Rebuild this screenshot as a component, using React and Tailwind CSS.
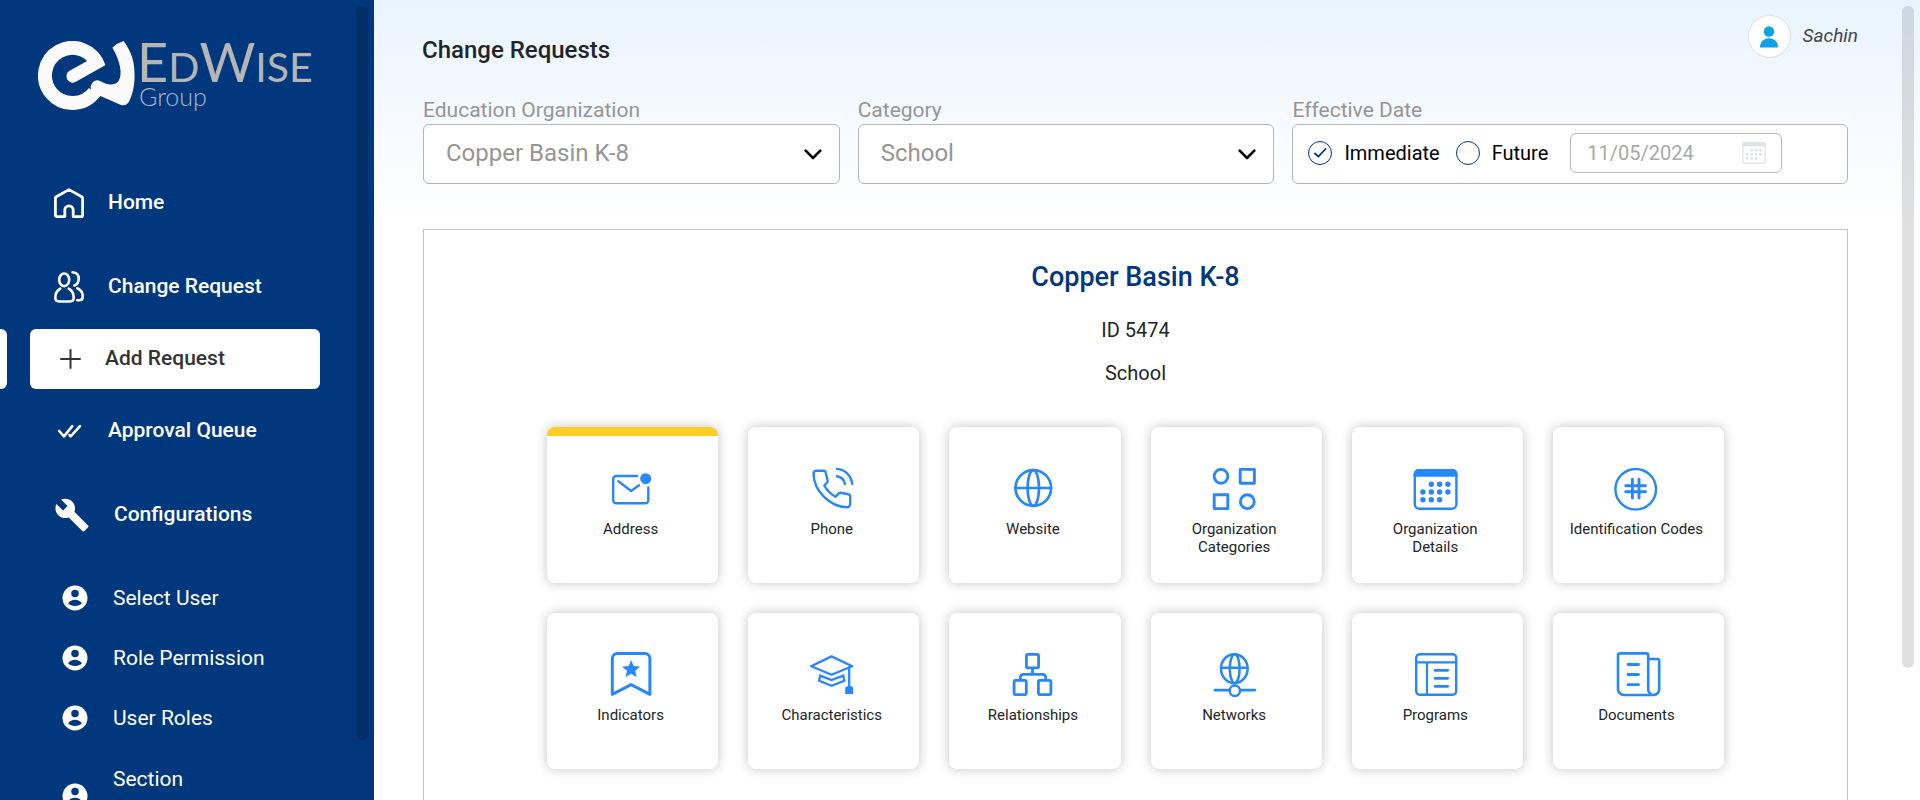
import React from "react";
import { MdBuild } from "react-icons/md";

function LogoMark() {
  return (
    <svg viewBox="115 124 290 208" className="h-[69px] w-[97px] shrink-0" aria-hidden="true">
      <path d="M297 203A83 83 0 1 0 284 278" fill="none" stroke="#fafafa" strokeWidth="42" />
      <path d="M209 214L266 182L300 165L315 198L228 247A19 19 0 0 1 209 214Z" fill="#fafafa" />
      <path
        d="M272 262C278 243 290 238 304 246C325 258 345 258 356 245C370 225 362 185 338 144Q352 130 372 124C398 160 405 190 405 230C405 260 398 290 386 310Q378 320 364 317L302 290L280 305Z"
        fill="#fafafa"
      />
    </svg>
  );
}

function HomeIcon() {
  return (
    <svg viewBox="0 0 30 30" className="h-[30px] w-[30px]" fill="none" stroke="currentColor" strokeWidth="2.8" strokeLinejoin="round" aria-hidden="true">
      <path d="M10.8 28.6H2.8a1.4 1.4 0 0 1-1.4-1.4V10.2a1.8 1.8 0 0 1 .9-1.5L15 1.6l12.7 7.1a1.8 1.8 0 0 1 .9 1.5v17a1.4 1.4 0 0 1-1.4 1.4h-8V22a4.2 4.2 0 0 0-8.4 0z" />
    </svg>
  );
}

function PeopleIcon() {
  return (
    <svg viewBox="0 0 30 32" className="h-8 w-[30px]" fill="none" stroke="currentColor" strokeWidth="2.6" strokeLinecap="round" aria-hidden="true">
      <ellipse cx="10.2" cy="8.8" rx="5" ry="6.3" />
      <path d="M6.3 17.6C2.7 19.6 1.3 22.5 1.3 26.6c0 2.9 1.2 3.9 3.8 3.9h10.8c2.6 0 3.8-1 3.8-3.9 0-4.1-1.4-7-5-9" />
      <path d="M18.6 1.3c4 .3 6.1 3.1 6.1 6.5 0 3.2-1.6 5.7-4.3 6.7" />
      <path d="M23.3 17.3c3.7 1.7 5.5 4.6 5.5 8.3 0 2.4-1.2 3.6-3.4 3.6h-2.2" />
    </svg>
  );
}

function PlusIcon() {
  return (
    <svg viewBox="0 0 21 20" className="h-5 w-[21px]" fill="none" stroke="currentColor" strokeWidth="2" strokeLinecap="round" aria-hidden="true">
      <path d="M1 10h19M10.5 1v18" />
    </svg>
  );
}

function DoubleCheckIcon() {
  return (
    <svg viewBox="-4 -8.5 30 30" className="h-[30px] w-[30px]" fill="none" stroke="currentColor" strokeWidth="2.6" strokeLinecap="round" strokeLinejoin="round" aria-hidden="true">
      <path d="M1.2 6.5L6 11.8L14.3 1.7M11.5 10.7L12.7 11.8L22 1.7" />
    </svg>
  );
}

function UserIcon() {
  return (
    <svg viewBox="0 0 24 24" className="mb-[3px] h-[30px] w-[30px]" aria-hidden="true">
      <circle cx="12" cy="12" r="10" fill="#fff" />
      <circle cx="12" cy="8.4" r="3" fill="#00377d" />
      <path d="M6.5 16.3c1-1.9 3.4-2.9 5.5-2.9s4.5 1 5.5 2.9c-1.2 1.3-3.3 2-5.5 2s-4.3-.7-5.5-2z" fill="#00377d" />
    </svg>
  );
}

function TileSvg({ width = 2.4, children }) {
  return (
    <svg
      viewBox="0 0 44 44"
      className="h-11 w-11 overflow-visible text-[#2787ff]"
      fill="none"
      stroke="currentColor"
      strokeWidth={width}
      strokeLinecap="round"
      strokeLinejoin="round"
      aria-hidden="true"
    >
      {children}
    </svg>
  );
}

const dots = [
  [18.3, 17.3], [26.6, 17.3], [34.9, 17.3],
  [9.9, 25], [18.3, 25], [26.6, 25], [34.9, 25],
  [9.9, 32.7], [18.3, 32.7], [26.6, 32.7],
];

function CalendarShape() {
  return (
    <>
      <rect x="1.8" y="3.2" width="41.6" height="38.6" rx="4.5" />
      <path d="M.6 9.7V7a5 5 0 0 1 5-5h34a5 5 0 0 1 5 5v2.7z" fill="currentColor" stroke="none" />
      {dots.map(([x, y]) => (
        <circle key={`${x}-${y}`} cx={x} cy={y} r="2.7" fill="currentColor" stroke="none" />
      ))}
    </>
  );
}

const tiles = [
  {
    label: "Address",
    active: true,
    icon: (
      <TileSvg>
        <path d="M28 9H7.2a3 3 0 0 0-3 3V33.3a3 3 0 0 0 3 3H36.3a3 3 0 0 0 3-3V20.5M9.4 14.3L22.1 24L30 18.3" />
        <circle cx="36.7" cy="11.7" r="5.5" fill="currentColor" stroke="none" />
      </TileSvg>
    ),
  },
  {
    label: "Phone",
    icon: (
      <TileSvg>
        <path d="M6.5 3.7H13.5a2.2 2.2 0 0 1 2.2 1.8l1.9 8a2.5 2.5 0 0 1-.6 2.2L14.3 18.5C17 23.5 20.5 27 25.5 29.7L28.6 26.6a2.5 2.5 0 0 1 2.3-.8L38.2 27.3a2.4 2.4 0 0 1 2 2.4V37a3.3 3.3 0 0 1-3.3 3.3C20 40 4 24 3.5 7a3.2 3.2 0 0 1 3-3.3z" />
        <path d="M26.9 1.9A16.5 16.5 0 0 1 42.2 17M26.9 9.2A9.5 9.5 0 0 1 34.9 17" />
      </TileSvg>
    ),
  },
  {
    label: "Website",
    icon: (
      <TileSvg width={2.7}>
        <circle cx="22.3" cy="21" r="17.8" />
        <ellipse cx="22.3" cy="21" rx="5.7" ry="17.8" />
        <path d="M4.5 21H40" />
      </TileSvg>
    ),
  },
  {
    label: "Organization Categories",
    icon: (
      <TileSvg width={2.9}>
        <circle cx="9" cy="9.3" r="6.9" />
        <rect x="28.2" y="2.4" width="14.2" height="13.9" />
        <rect x="2.2" y="27.7" width="13.6" height="13.9" />
        <circle cx="35.3" cy="34.7" r="6.9" />
      </TileSvg>
    ),
  },
  {
    label: "Organization Details",
    icon: (
      <TileSvg>
        <CalendarShape />
      </TileSvg>
    ),
  },
  {
    label: "Identification Codes",
    icon: (
      <TileSvg>
        <circle cx="21.7" cy="22.3" r="20.3" />
        <path d="M18.4 12.3V31M25 12.3V31M11.7 18.7H31.5M11.7 24.7H31.5" strokeWidth="2.9" />
      </TileSvg>
    ),
  },
  {
    label: "Indicators",
    icon: (
      <TileSvg width={3}>
        <path d="M3.3 41.3V5.5a5 5 0 0 1 5-5H35.9a5 5 0 0 1 5 5V41.3L22.1 31.7z" />
        <path
          d="M22.1 7.9L24.45 13.36L30.4 13.9L25.9 17.84L27.2 23.6L22.1 20.6L17 23.6L18.3 17.84L13.8 13.9L19.75 13.36z"
          fill="currentColor"
          strokeWidth="0.6"
        />
      </TileSvg>
    ),
  },
  {
    label: "Characteristics",
    icon: (
      <TileSvg width={2.3}>
        <path d="M1.2 13.3L21.5 3.4L42.2 13.3L21.5 21.7z" />
        <path d="M10.2 22.6L21.5 27L33.3 22.6L34.3 27.7L21.5 32.7L9.2 27.7z" strokeLinejoin="miter" />
        <path d="M39.2 14.3V34" />
        <path d="M35.2 41V35.5a2.2 2.2 0 0 1 2.2-2.2h3.6a2.2 2.2 0 0 1 2.2 2.2V41z" fill="currentColor" stroke="none" />
      </TileSvg>
    ),
  },
  {
    label: "Relationships",
    icon: (
      <TileSvg width={2.8}>
        <rect x="15.4" y="1.4" width="12.2" height="13.4" rx="1.5" />
        <rect x="3.1" y="27.4" width="12.2" height="14.2" rx="1.5" />
        <rect x="27.4" y="27.4" width="12.5" height="14.2" rx="1.5" />
        <path d="M21.5 15.5V21.3M9.3 26.5V24.3a3 3 0 0 1 3-3H31.7a3 3 0 0 1 3 3V26.5" />
      </TileSvg>
    ),
  },
  {
    label: "Networks",
    icon: (
      <TileSvg width={2.5}>
        <ellipse cx="22.3" cy="15.7" rx="13.3" ry="14.5" />
        <ellipse cx="22.7" cy="15.7" rx="4.9" ry="14.5" />
        <path d="M9 14.7H35.5" />
        <circle cx="22.8" cy="37.7" r="5.2" />
        <path d="M3 37.2H17.2M28.4 37.2H42.8" strokeWidth="2.8" />
      </TileSvg>
    ),
  },
  {
    label: "Programs",
    icon: (
      <TileSvg width={2.4}>
        <rect x="3.2" y="1.2" width="40" height="40.6" rx="3.5" />
        <path d="M3.3 9.3H43M14 9.3V41.5" strokeWidth="2.2" />
        <path d="M22 17.3H34.7M22 25.3H34.7M22 33.3H34.7" strokeWidth="2.7" />
      </TileSvg>
    ),
  },
  {
    label: "Documents",
    icon: (
      <TileSvg width={2.6}>
        <path d="M34.2 36.5V2.4a2 2 0 0 0-2-2H6a2 2 0 0 0-2 2V36a6 6 0 0 0 6 6H39.7a5.5 5.5 0 0 1-5.5-5.5M34.2 6H43.2a2 2 0 0 1 2 2V36.3a5.6 5.6 0 0 1-5.6 5.6" />
        <path d="M14 11.5H24.5M14 21.5H24.5M14 31.7H24.5" strokeWidth="2.8" />
      </TileSvg>
    ),
  },
];

function Tile({ label, icon, active }) {
  return (
    <button
      type="button"
      className="relative flex h-[156px] flex-col items-center overflow-visible rounded-lg bg-white pt-10 pr-1 shadow-[0_0_12px_rgba(0,0,0,0.24)]"
    >
      {active && <span className="absolute inset-x-0 top-0 h-[9px] rounded-t-lg bg-[#ffcd23]" />}
      {icon}
      <span className="mt-[9px] max-w-[136px] px-px text-center text-[15px] leading-[18px] text-[#212529]">
        {label.startsWith("Organization ") ? (
          <>
            Organization
            <br />
            {label.slice(13)}
          </>
        ) : (
          label
        )}
      </span>
    </button>
  );
}

function NavLink({ icon, children, className = "" }) {
  return (
    <a href="#" className={`flex h-[60px] items-center gap-6 pl-[54px] text-[21px] font-medium text-white ${className}`}>
      {icon}
      <span>{children}</span>
    </a>
  );
}

function Sidebar() {
  return (
    <aside className="relative w-[374px] shrink-0 overflow-hidden bg-[#00377d]">
      <div className="flex h-[110px] gap-[2px] pt-[41px] pl-[38px]">
        <LogoMark />
        <div className="flex flex-col font-['Lato',sans-serif] text-[#b5b5b5]">
          <div className="text-[54px] leading-[42px]">
            E<span className="text-[41px]">D</span>W<span className="text-[41px]">ISE</span>
          </div>
          <div className="pl-[2px] text-[25px] leading-4 font-light text-[#b0b8c2]">Group</div>
        </div>
      </div>
      <nav className="mt-[63px] flex flex-col">
        <NavLink icon={<HomeIcon />}>Home</NavLink>
        <NavLink icon={<PeopleIcon />} className="mt-6">Change Request</NavLink>
        <div className="mt-3 flex gap-[23px]">
          <span className="h-[60px] w-[7px] rounded-r-md bg-white" />
          <a href="#" aria-current="page" className="flex h-[60px] w-[290px] items-center gap-6 rounded-md bg-white pl-[30px] text-[21px] font-medium text-[#333]">
            <PlusIcon />
            <span>Add Request</span>
          </a>
        </div>
        <NavLink icon={<DoubleCheckIcon />} className="mt-3">Approval Queue</NavLink>
        <NavLink icon={<MdBuild className="h-9 w-9" aria-hidden="true" />} className="mt-6">Configurations</NavLink>
        <div className="mt-6 flex flex-col text-[21px] text-white">
          {["Select User", "Role Permission", "User Roles"].map((t) => (
            <a key={t} href="#" className="flex h-[60px] items-center gap-[23px] pl-[60px]">
              <UserIcon />
              <span>{t}</span>
            </a>
          ))}
          <a href="#" className="flex h-24 items-center gap-[23px] pl-[60px]">
            <UserIcon />
            <span className="h-[72px] leading-9">Section</span>
          </a>
        </div>
      </nav>
      <div className="absolute top-[6px] right-[6px] bottom-[60px] w-3 rounded-full bg-[#022f66]" />
    </aside>
  );
}

function SelectField({ id, label, value }) {
  return (
    <div className="flex flex-col gap-[2px]">
      <label htmlFor={id} className="text-[21px] leading-6 text-[#959595]">{label}</label>
      <div className="relative">
        <select id={id} defaultValue={value} className="block h-[60px] w-full appearance-none rounded-md border border-[#b5b5b5] bg-white pr-12 pb-[2px] pl-[22px] text-[24px] text-[#959595]">
          <option>{value}</option>
        </select>
        <svg viewBox="0 0 18 11" className="pointer-events-none absolute top-[25px] right-[18px] h-[11px] w-[18px]" fill="none" stroke="#000" strokeWidth="2.6" strokeLinecap="round" strokeLinejoin="round" aria-hidden="true">
          <path d="M1.7 1.7L9 9L16.3 1.7" />
        </svg>
      </div>
    </div>
  );
}

function Radio({ id, label, defaultChecked }) {
  return (
    <div className="flex items-center gap-3">
      <span className="relative flex">
        <input id={id} type="radio" name="effective" defaultChecked={defaultChecked} className="peer h-6 w-6 appearance-none rounded-full border border-[#00377d] bg-white" />
        <svg viewBox="0 0 24 24" className="pointer-events-none absolute inset-0 hidden h-6 w-6 peer-checked:block" fill="none" stroke="#00377d" strokeWidth="1.8" strokeLinecap="round" strokeLinejoin="round" aria-hidden="true">
          <path d="M7 12.5L10.3 15.7L17.5 8" />
        </svg>
      </span>
      <label htmlFor={id} className="text-[20px] leading-6 text-black">{label}</label>
    </div>
  );
}

export default function App() {
  return (
    <div className="flex h-screen overflow-hidden bg-white font-['Roboto',sans-serif]">
      <Sidebar />
      <main className="relative flex min-w-0 flex-1 flex-col overflow-hidden bg-[linear-gradient(#e8f4ff,#f5f9ff_110px,#ffffff_230px)] pr-[72px] pl-12">
        <header className="-mr-[10px] flex h-[66px] items-start justify-between pt-[15px]">
          <h1 className="mt-[19px] text-[24px] leading-8 font-medium text-[#212529]">Change Requests</h1>
          <button type="button" className="flex items-center gap-3 text-[19px] text-[#444] italic">
            <span className="flex h-[43px] w-[43px] items-center justify-center rounded-full border border-[#dcdfe3] bg-white">
              <svg viewBox="0 0 18 22" className="h-[22px] w-[18px]" fill="#0ea2e4" aria-hidden="true">
                <circle cx="9" cy="5.5" r="5.2" />
                <path d="M0 21.5c0-5.8 3.7-9.3 9-9.3s9 3.5 9 9.3z" />
              </svg>
            </span>
            <span>Sachin</span>
          </button>
        </header>

        <form className="mt-8 ml-px grid grid-cols-[3fr_3fr_4fr] gap-[18px]">
          <SelectField id="org" label="Education Organization" value="Copper Basin K-8" />
          <SelectField id="category" label="Category" value="School" />
          <fieldset className="flex min-w-0 flex-col">
            <legend className="mb-[2px] text-[21px] leading-6 text-[#959595]">Effective Date</legend>
            <div className="flex h-[60px] items-center rounded-md border border-[#b5b5b5] bg-white pb-[2px] pl-[15px]">
              <div className="flex items-center gap-4">
                <Radio id="immediate" label="Immediate" defaultChecked />
                <Radio id="future" label="Future" />
              </div>
              <div className="relative ml-[22px]">
                <input aria-label="Date" defaultValue="11/05/2024" disabled className="block h-10 w-[212px] rounded-md border border-[#b9b9b9] bg-white pl-4 text-[20px] text-[#a9a9a9]" />
                <svg viewBox="0 0 45 45" className="absolute top-2 right-4 h-6 w-6 text-[#dfe3e8]" fill="none" stroke="currentColor" strokeWidth="2.4" aria-hidden="true">
                  <CalendarShape />
                </svg>
              </div>
            </div>
          </fieldset>
        </form>

        <section className="mt-[45px] ml-px flex-1 border border-b-0 border-[#c4c4c4] bg-white px-[123px] pt-[31px] text-center">
          <h2 className="text-[27px] leading-8 font-medium text-[#00377d]">Copper Basin K-8</h2>
          <p className="mt-[25px] text-[20px] leading-6 text-[#212529]">ID 5474</p>
          <p className="mt-[19px] text-[20px] leading-6 text-[#212529]">School</p>
          <div className="mt-[42px] grid grid-cols-6 gap-[30px]">
            {tiles.map((tile) => (
              <Tile key={tile.label} {...tile} />
            ))}
          </div>
        </section>
        <div className="absolute top-[6px] right-[6px] h-[662px] w-3 rounded-full bg-black/12" />
      </main>
    </div>
  );
}
